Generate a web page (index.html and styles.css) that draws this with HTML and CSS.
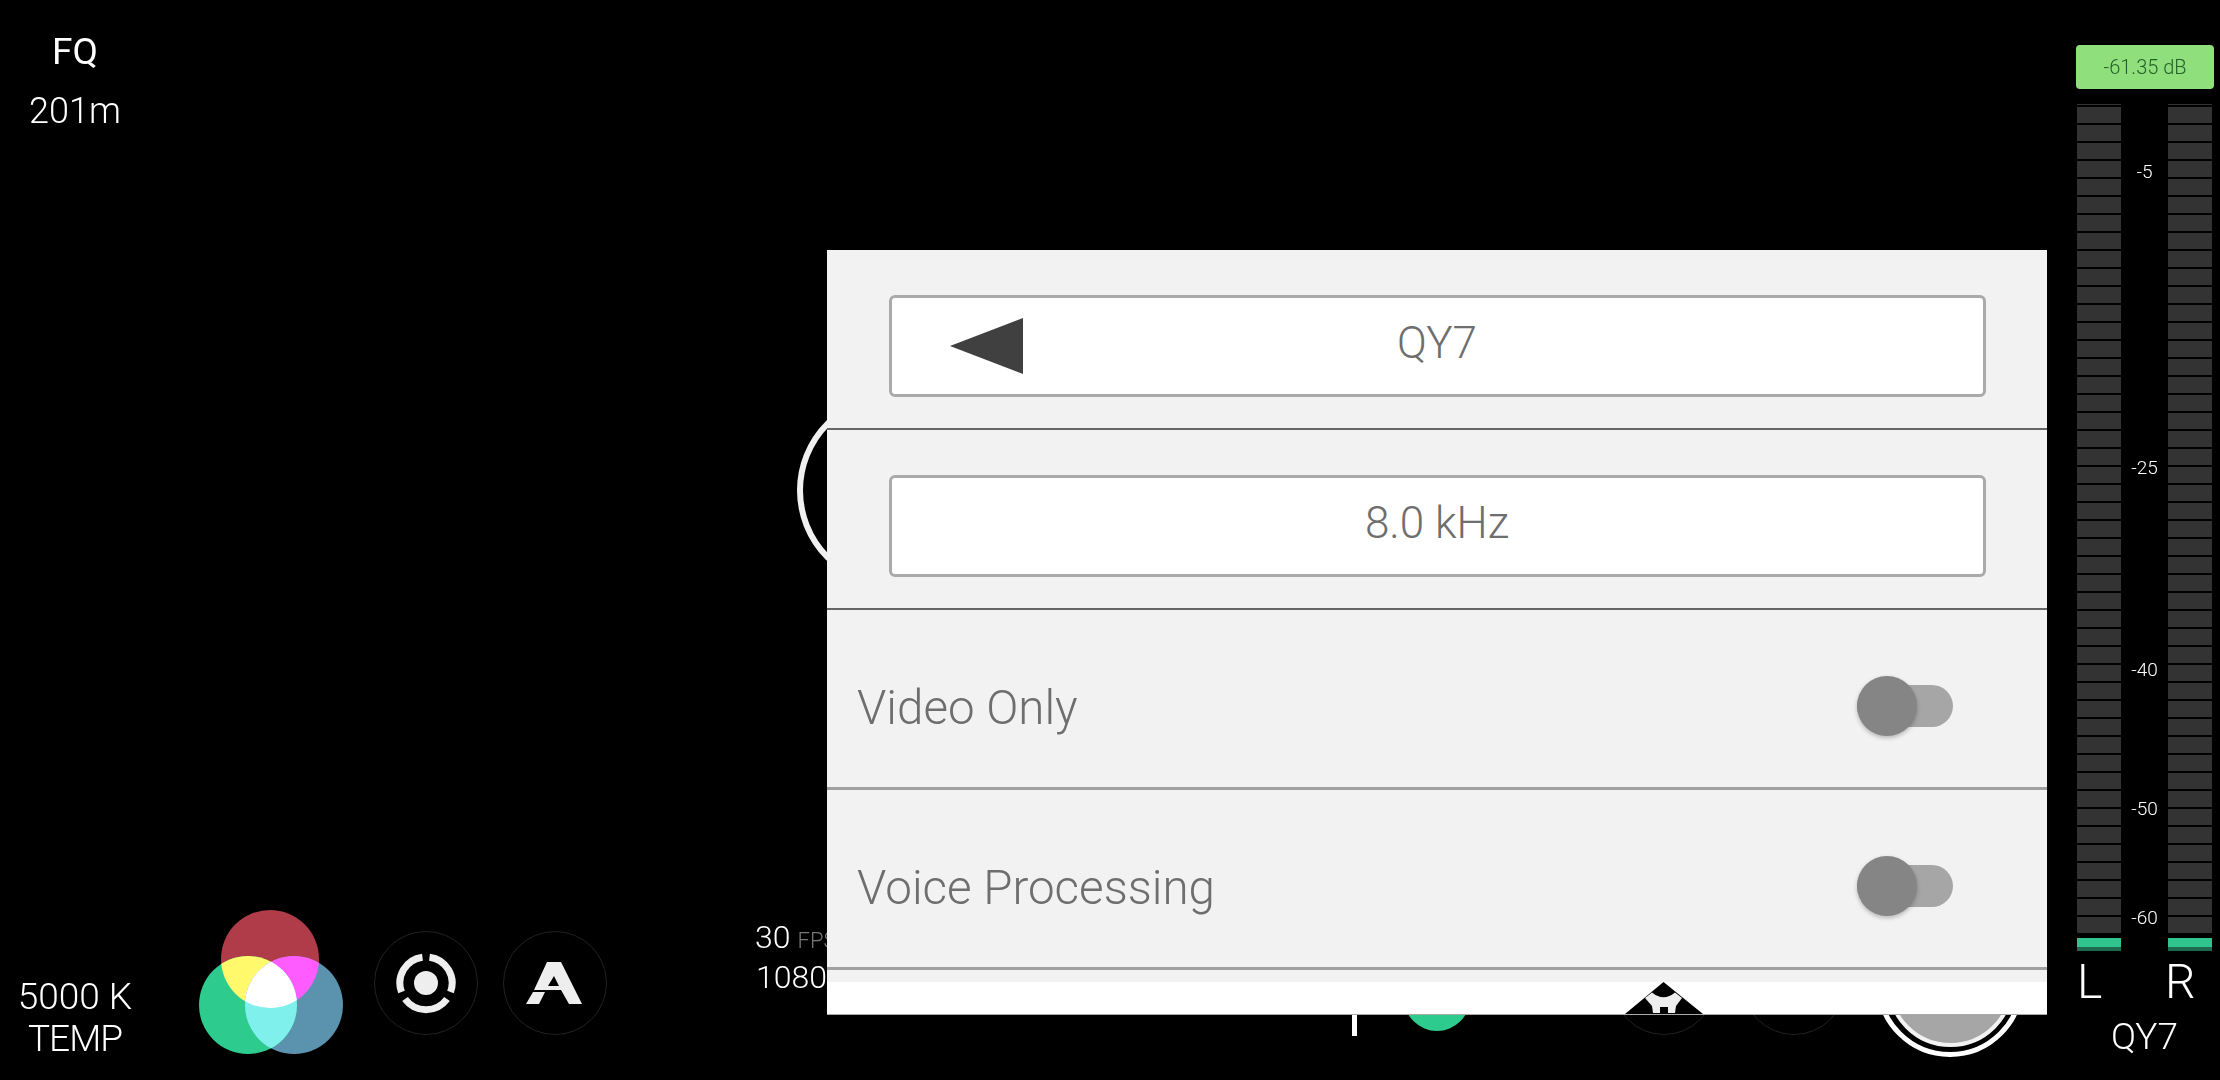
FILE: index.html
```html
<!DOCTYPE html>
<html lang="en">
<head>
  <meta charset="UTF-8">
  <title>Camera</title>
  <link rel="stylesheet" href="styles.css">
</head>
<body>
  <div class="screen">
    <div class="main">
      <div class="focus">
        <div class="focus-label">FQ</div>
        <div class="focus-value">201m</div>
      </div>

      <div class="controls">
        <div class="temp">
          <div>5000 K</div>
          <div class="temp-label">TEMP</div>
        </div>

        <svg class="rgb" width="144" height="144" viewBox="0 0 144 144">
          <defs>
            <clipPath id="clip-red"><circle cx="71" cy="49" r="49"/></clipPath>
            <clipPath id="clip-green"><circle cx="49" cy="95" r="49"/></clipPath>
          </defs>
          <circle cx="71" cy="49" r="49" fill="#b03b49"/>
          <circle cx="95" cy="95" r="49" fill="#5b93ae"/>
          <circle cx="49" cy="95" r="49" fill="#2ecb8e"/>
          <g clip-path="url(#clip-red)">
            <circle cx="49" cy="95" r="49" fill="#fff96b"/>
            <circle cx="95" cy="95" r="49" fill="#ff5cff"/>
          </g>
          <g clip-path="url(#clip-green)">
            <circle cx="95" cy="95" r="49" fill="#80f0ec"/>
            <g clip-path="url(#clip-red)">
              <circle cx="95" cy="95" r="49" fill="#fff"/>
            </g>
          </g>
        </svg>

        <div class="round-btn btn-target">
          <svg width="64" height="64" viewBox="0 0 64 64">
            <circle cx="32" cy="32" r="12" fill="#eee"/>
            <g fill="none" stroke="#eee" stroke-width="7">
              <path d="M28.5 6.2A26 26 0 0 0 7.5 41"/>
              <path d="M35.5 6.2A26 26 0 0 1 56.5 41"/>
              <path d="M11 48A26 26 0 0 0 53 48"/>
            </g>
          </svg>
        </div>

        <div class="round-btn btn-auto">
          <svg width="60" height="44" viewBox="0 0 60 44">
            <path fill-rule="evenodd" d="M22 1H36L57 43H44L36 29H9ZM29 15L23 25H34Z" fill="#eee"/>
            <path d="M8 31H20L14 43H1Z" fill="#eee"/>
          </svg>
        </div>

        <div class="format">
          <div class="fps">30<span>FPS</span></div>
          <div class="lines">1080</div>
        </div>

        <div class="tick"></div>
        <div class="dot"></div>
        <div class="round-btn btn-gear"></div>
        <div class="round-btn btn-blank"></div>
        <div class="shutter"><div class="shutter-core"></div></div>
      </div>
    </div>

    <div class="meter">
      <div class="level">-61.35 dB</div>
      <div class="bars">
        <div class="bar"><i></i></div>
        <div class="scale">
          <span class="at-5">-5</span>
          <span class="at-25">-25</span>
          <span class="at-40">-40</span>
          <span class="at-50">-50</span>
          <span class="at-60">-60</span>
        </div>
        <div class="bar"><i></i></div>
      </div>
      <div class="channels">
        <span>L</span>
        <span>R</span>
      </div>
      <div class="source">QY7</div>
    </div>

    <div class="ring"></div>

    <div class="panel">
      <div class="row row-field">
        <div class="field">
          <svg class="back" width="74" height="56" viewBox="0 0 74 56"><path d="M0 28L73 0V56Z" fill="#404040"/></svg>
          QY7
        </div>
      </div>
      <div class="row row-field">
        <div class="field">8.0 kHz</div>
      </div>
      <div class="row row-toggle">
        <span>Video Only</span>
        <div class="toggle"><div class="thumb"></div></div>
      </div>
      <div class="row row-toggle">
        <span>Voice Processing</span>
        <div class="toggle"><div class="thumb"></div></div>
      </div>
      <div class="panel-foot">
        <svg width="80" height="32" viewBox="0 0 80 32">
          <path d="M39.5 0L79 32H1Z" fill="#000"/>
          <path d="M28 10.5Q39.5 20 51 10.5L58 16L52 24L51 31H44V25H36V31H29L28 24L21 16Z" fill="#eee"/>
        </svg>
      </div>
    </div>
  </div>
</body>
</html>
```

FILE: styles.css
```css
* {
  margin: 0;
  padding: 0;
  box-sizing: border-box;
}

body {
  background: #000;
  font-family: 'Roboto', sans-serif;
  font-weight: 300;
  color: #fff;
}

.screen {
  position: relative;
  width: 2220px;
  height: 1080px;
  overflow: hidden;
  display: flex;
  will-change: opacity;
}

.main {
  width: 2077px;
  flex-shrink: 0;
  display: flex;
  flex-direction: column;
  justify-content: space-between;
}

.focus {
  width: 150px;
  padding-top: 31px;
  text-align: center;
}

.focus-label {
  font-size: 37px;
  line-height: 42px;
  font-weight: 400;
}

.focus-value {
  font-size: 36px;
  line-height: 42px;
  margin-top: 17px;
}

/* bottom row, everything centred on y=983 */
.controls {
  height: 194px;
  display: flex;
  align-items: center;
}

.controls > * {
  flex-shrink: 0;
}

.temp {
  width: 150px;
  margin-top: 70px;
  text-align: center;
  font-size: 37px;
  line-height: 42px;
}

.temp-label {
  letter-spacing: -1px;
}

.rgb {
  margin-left: 49px;
  margin-top: -2px;
}

.round-btn {
  width: 104px;
  height: 104px;
  border-radius: 50%;
  border: 1px solid #222;
  display: flex;
  align-items: center;
  justify-content: center;
}

.btn-target {
  margin-left: 31px;
}

.btn-auto {
  margin-left: 25px;
}

.format {
  margin-left: 148px;
  margin-top: -52px;
  width: 90px;
  line-height: 36px;
}

.fps {
  font-size: 32px;
}

.fps span {
  font-size: 22px;
  color: #777;
  margin-left: 7px;
}

.lines {
  font-size: 32px;
  margin-left: 1px;
}

.tick {
  width: 5px;
  height: 106px;
  background: #fff;
  margin-left: 507px;
}

.dot {
  width: 66px;
  height: 66px;
  border-radius: 50%;
  background: #2ecb8e;
  margin-left: 47px;
  margin-top: 30px;
}

.btn-gear {
  margin-left: 142px;
}

.btn-blank {
  margin-left: 26px;
}

.shutter {
  width: 148px;
  height: 148px;
  margin-left: 30px;
  border-radius: 50%;
  border: 5px solid #fff;
  display: flex;
  align-items: center;
  justify-content: center;
}

.shutter-core {
  width: 127px;
  height: 127px;
  border-radius: 50%;
  background: #a6a6a6;
  border: 4px solid #f2f2f2;
}

/* audio meter */
.meter {
  width: 143px;
  flex-shrink: 0;
  padding-top: 45px;
}

.level {
  width: 138px;
  margin-left: -1px;
  height: 44px;
  line-height: 44px;
  background: #8fe07c;
  border-radius: 4px;
  color: #25602a;
  font-size: 20px;
  text-align: center;
}

.bars {
  display: flex;
  margin-top: 15px;
  height: 847px;
}

.bar {
  position: relative;
  width: 44px;
  background: linear-gradient(#000 2px, #333 2px) 0 1px / 100% 18px;
}

.bar i {
  position: absolute;
  left: 0;
  right: 0;
  bottom: 0;
  height: 18px;
  background: #2fc48d;
  border-top: 5px solid #000;
  border-bottom: 4px solid #1d6a50;
}

.scale {
  position: relative;
  width: 47px;
}

.scale span {
  position: absolute;
  width: 100%;
  text-align: center;
  font-size: 19px;
  line-height: 20px;
}

.at-5 { top: 58px; }
.at-25 { top: 354px; }
.at-40 { top: 556px; }
.at-50 { top: 695px; }
.at-60 { top: 804px; }

.channels {
  display: flex;
  padding-top: 4px;
  font-size: 48px;
  line-height: 54px;
}

.channels span {
  flex: 0 0 88px;
}

.source {
  width: 135px;
  text-align: center;
  font-size: 37px;
  line-height: 40px;
  margin-top: 8px;
}

.ring {
  position: absolute;
  left: 797px;
  top: 393px;
  width: 195px;
  height: 195px;
  border-radius: 50%;
  border: 6px solid #f0f0f0;
}

/* settings sheet over the camera view */
.panel {
  position: absolute;
  left: 827px;
  top: 250px;
  width: 1220px;
  height: 765px;
  background: #f2f2f2;
  color: #6e6e6e;
}

.row {
  height: 180px;
  display: flex;
  align-items: center;
}

.row-field {
  justify-content: center;
  border-bottom: 2px solid #666;
  padding-top: 14px;
}

.row-toggle {
  justify-content: space-between;
  border-bottom: 3px solid #a0a0a0;
  padding: 15px 94px 0 30px;
  font-size: 47.5px;
}

.row-toggle span {
  margin-top: 3px;
}

.field {
  position: relative;
  width: 1097px;
  height: 102px;
  padding-bottom: 7px;
  background: #fff;
  border: 3px solid #aaa;
  border-radius: 6px;
  display: flex;
  align-items: center;
  justify-content: center;
  font-size: 44px;
}

.back {
  position: absolute;
  left: 58px;
  top: 20px;
}

.toggle {
  position: relative;
  width: 96px;
  height: 42px;
  background: #a6a6a6;
  border-radius: 21px;
}

.thumb {
  position: absolute;
  left: 0;
  top: -9px;
  width: 60px;
  height: 60px;
  border-radius: 50%;
  background: #858585;
  box-shadow: 0 2px 4px rgba(0, 0, 0, 0.25);
}

.panel-foot {
  height: 33px;
  margin-top: 12px;
  background: #fff;
  border-bottom: 1px solid #aaa;
  padding-left: 797px;
}

.panel-foot svg {
  display: block;
}
```
